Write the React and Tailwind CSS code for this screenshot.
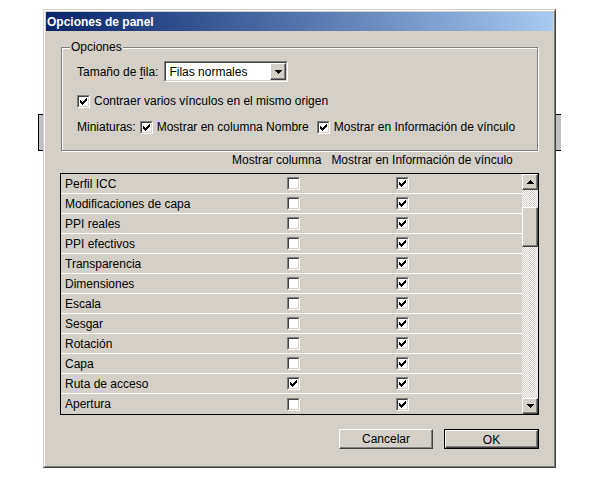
import React from 'react'

// classic win9x style dialog - "Opciones de panel"

const rows = [
   { name: 'Perfil ICC', col: false, info: true },
   { name: 'Modificaciones de capa', col: false, info: true },
   { name: 'PPI reales', col: false, info: true },
   { name: 'PPI efectivos', col: false, info: true },
   { name: 'Transparencia', col: false, info: true },
   { name: 'Dimensiones', col: false, info: true },
   { name: 'Escala', col: false, info: true },
   { name: 'Sesgar', col: false, info: true },
   { name: 'Rotación', col: false, info: true },
   { name: 'Capa', col: false, info: true },
   { name: 'Ruta de acceso', col: true, info: true },
   { name: 'Apertura', col: false, info: true },
]

const Check = ({ on, className = '' }) => (
   <span className={`block shrink-0 w-[13px] h-[13px] border border-t-[#808080] border-l-[#808080] border-r-white border-b-white ${className}`}>
      <span className="block w-[11px] h-[11px] border border-t-[#404040] border-l-[#404040] border-r-[#d4d0c8] border-b-[#d4d0c8] bg-white">
         {on && (
            <svg width="7" height="7" viewBox="0 0 7 7" className="block ml-[1px] mt-[1px]" shapeRendering="crispEdges">
               <path fill="#000" d="M6 0h1v1h-1z M5 1h2v1h-2z M0 2h1v1h-1z M4 2h3v1h-3z M0 3h2v1h-2z M3 3h3v1h-3z M0 4h5v1h-5z M1 5h3v1h-3z M2 6h1v1h-1z" />
            </svg>
         )}
      </span>
   </span>
)

const Arrow = ({ down }) => (
   <svg width="7" height="4" viewBox="0 0 7 4" shapeRendering="crispEdges" className="block">
      <path fill="#000" d={down ? 'M0 0h7v1h-7z M1 1h5v1h-5z M2 2h3v1h-3z M3 3h1v1h-1z' : 'M3 0h1v1h-1z M2 1h3v1h-3z M1 2h5v1h-5z M0 3h7v1h-7z'} />
   </svg>
)

// raised 3d box (buttons, scroll arrows, thumb)
const raised = 'border border-t-white border-l-white border-r-[#404040] border-b-[#404040] shadow-[inset_-1px_-1px_#808080] bg-[#d4d0c8]'
const dither = 'bg-[repeating-conic-gradient(#ffffff_0%_25%,#d4d0c8_0%_50%)] bg-[length:2px_2px]'

const App = () => {
   return (
      <div className="relative w-[600px] h-[490px] bg-white overflow-hidden text-[12px] text-black" style={{ fontFamily: '"Liberation Sans", Arial, sans-serif' }}>

         {/* window behind the dialog */}
         <div className="absolute left-[38px] top-[114px] w-[523px] h-[37px] bg-[#c0c0c0] border-t border-b border-l border-black"></div>

         <div className="relative ml-[43px] mt-[9px] w-[513px] h-[459px] border border-t-[#d4d0c8] border-l-[#d4d0c8] border-r-[#404040] border-b-[#404040] bg-[#d4d0c8]">
            <div className="h-full border border-t-white border-l-white border-r-[#808080] border-b-[#808080] p-[1px] flex flex-col">

               <div className="h-[19px] bg-linear-to-r from-[#0a246a] to-[#a6caf0] flex items-center pl-[1px]">
                  <span className="text-white font-bold text-[12px] leading-none">Opciones de panel</span>
               </div>

               <div className="px-[14px] flex flex-col">

                  {/* group box */}
                  <div className="relative mt-[16px] mx-[1px] border border-[#808080] shadow-[inset_1px_1px_#ffffff,1px_1px_#ffffff] pt-[13px] pb-[13px] pl-[15px]">
                     <span className="absolute left-[8px] -top-[8px] px-[1px] bg-[#d4d0c8] leading-[14px]">Opciones</span>

                     <div className="flex items-center h-[21px]">
                        <span>Tamaño de <span className="underline underline-offset-2">f</span>ila:</span>
                        <div className="ml-[6px] w-[124px] h-[21px] border border-t-[#808080] border-l-[#808080] border-r-white border-b-white">
                           <div className="h-full border border-t-[#404040] border-l-[#404040] border-r-[#d4d0c8] border-b-[#d4d0c8] bg-white flex items-center">
                              <span className="pl-[3px] flex-1">Filas normales</span>
                              <div className={`w-[16px] h-[17px] flex items-center justify-center ${raised}`}>
                                 <Arrow down />
                              </div>
                           </div>
                        </div>
                     </div>

                     <div className="flex items-center h-[20px] mt-[9px] gap-[4px]">
                        <Check on />
                        <span>Contraer varios vínculos en el mismo origen</span>
                     </div>

                     <div className="flex items-center h-[20px] mt-[6px]">
                        <span>Miniaturas:</span>
                        <Check on className="ml-[4px]" />
                        <span className="ml-[4px]">Mostrar en columna Nombre</span>
                        <Check on className="ml-[8px]" />
                        <span className="ml-[4px]">Mostrar en Información de vínculo</span>
                     </div>
                  </div>

                  {/* column headers */}
                  <div className="flex h-[14px] mt-[2px] leading-[14px]">
                     <span className="ml-[172px]">Mostrar columna</span>
                     <span className="ml-[10px]">Mostrar en Información de vínculo</span>
                  </div>

                  {/* list */}
                  <div className="mt-[6px] border border-black flex h-[242px]">
                     <div className="flex-1 flex flex-col">
                        {rows.map((row, i) => (
                           <div key={i} className={`h-[20px] flex items-center ${i < rows.length - 1 ? 'border-b border-white' : ''}`}>
                              <span className="pl-[4px] w-[226px]">{row.name}</span>
                              <Check on={row.col} />
                              <Check on={row.info} className="ml-[96px]" />
                           </div>
                        ))}
                     </div>
                     <div className="w-[16px] flex flex-col">
                        <div className={`h-[16px] flex items-center justify-center ${raised}`}><Arrow /></div>
                        <div className={`h-[17px] ${dither}`}></div>
                        <div className={`h-[40px] ${raised}`}></div>
                        <div className={`flex-1 ${dither}`}></div>
                        <div className={`h-[16px] flex items-center justify-center ${raised}`}><Arrow down /></div>
                     </div>
                  </div>

                  {/* buttons */}
                  <div className="flex justify-end gap-[11px] mt-[14px]">
                     <button className={`w-[94px] h-[20px] ${raised}`}>Cancelar</button>
                     <div className="border border-black">
                        <button className={`block w-[93px] h-[18px] ${raised}`}>OK</button>
                     </div>
                  </div>
               </div>
            </div>
         </div>
      </div>
   )
}

export default App
